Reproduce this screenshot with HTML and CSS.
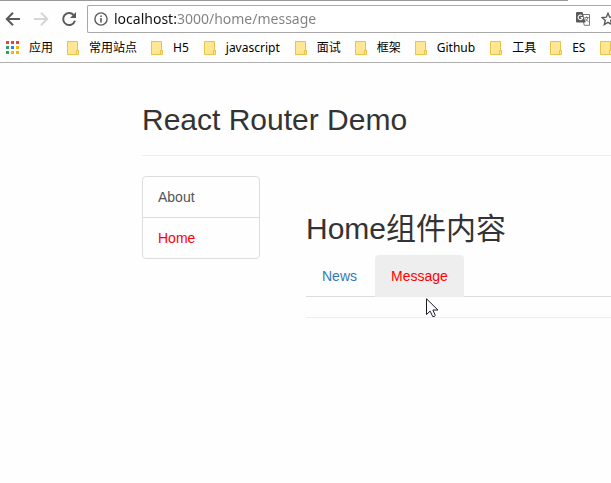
FILE: index.html
```html
<!DOCTYPE html>
<html lang="zh-CN">
<head>
<meta charset="utf-8">
<meta name="viewport" content="width=device-width, initial-scale=1">
<title>React Router Demo</title>
<link rel="stylesheet" href="styles.css">
</head>
<body>
<svg class="defs" aria-hidden="true">
  <symbol id="folder" viewBox="0 0 12 14">
    <path d="M.5.5h10v9h1v4H.5z" fill="#ffe694" stroke="#e8c34a"/>
    <path d="M9.5 9.5h2v3l-1 1h-1z" fill="#ffe694" stroke="#e8c34a"/>
  </symbol>
</svg>
<header class="browser">
  <div class="toolbar">
    <button class="nav-button" type="button" aria-label="Back">
      <svg width="16" height="16" viewBox="0 0 16 16"><path d="M15 8H2M8 1.8 1.8 8 8 14.2" fill="none" stroke="#5a5a5a" stroke-width="2"/></svg>
    </button>
    <button class="nav-button" type="button" aria-label="Forward" disabled>
      <svg width="16" height="16" viewBox="0 0 16 16"><path d="M1 8h13M8 1.8 14.2 8 8 14.2" fill="none" stroke="#d6d6d6" stroke-width="2"/></svg>
    </button>
    <button class="nav-button" type="button" aria-label="Reload">
      <svg width="16" height="16" viewBox="0 0 16 16"><path d="M12.6 4A6 6 0 1 0 13.9 9.8" fill="none" stroke="#5a5a5a" stroke-width="2"/><path d="M15 1v6H9z" fill="#5a5a5a"/></svg>
    </button>
    <div class="address">
      <svg width="14" height="14" viewBox="0 0 14 14"><circle cx="7" cy="7" r="6.1" fill="none" stroke="#5a5a5a" stroke-width="1.4"/><path d="M6.2 6h1.6v4.5H6.2zM6.2 3.4h1.6V5H6.2z" fill="#5a5a5a"/></svg>
      <input class="url" type="text" aria-label="Address" value="localhost:3000/home/message" spellcheck="false">
      <button class="address-button" type="button" aria-label="Translate">
        <svg width="14" height="14" viewBox="0 0 14 14"><path d="M6 2.5h7.5v10.8H8.2L6 2.5" fill="#fff" stroke="#777"/><path d="M0 1q0-1 1-1h5.5l3 10.5H1q-1 0-1-1z" fill="#5a5a5a"/><path d="M6 3.7A2.3 2.3 0 1 0 6.7 5.6H4.6" fill="none" stroke="#fff" stroke-width="1.1"/><path d="M8.6 5.5h4.2M10.6 4.5v1M12 5.5q-.5 2.5-3 4M9.3 6.5q1 2 3.2 3.2" fill="none" stroke="#777"/></svg>
      </button>
      <button class="address-button" type="button" aria-label="Bookmark this page">
        <svg width="14" height="14" viewBox="0 0 14 14"><path d="m7 1.3 1.7 3.9 4.2.4-3.2 2.8 1 4.2L7 10.4l-3.7 2.2 1-4.2L1.1 5.6l4.2-.4z" fill="none" stroke="#5a5a5a" stroke-width="1.4"/></svg>
      </button>
    </div>
  </div>
  <nav class="bookmarks" aria-label="Bookmarks">
    <a class="bookmark" href="#"><svg width="13" height="14" viewBox="0 0 13 14"><path d="M0 0h3v3H0zM5 0h3v3H5zM10 0h3v3h-3z" fill="#ea4335"/><path d="M0 5h3v3H0zM0 10h3v3H0z" fill="#34a060"/><path d="M5 5h3v3H5z" fill="#2a85f5"/><path d="M10 5h3v3h-3zM5 10h3v3H5zM10 10h3v3h-3z" fill="#fbb30c"/></svg>应用</a>
    <a class="bookmark" href="#"><svg width="12" height="14"><use href="#folder"/></svg>常用站点</a>
    <a class="bookmark latin" href="#"><svg width="12" height="14"><use href="#folder"/></svg>H5</a>
    <a class="bookmark latin" href="#"><svg width="12" height="14"><use href="#folder"/></svg>javascript</a>
    <a class="bookmark" href="#"><svg width="12" height="14"><use href="#folder"/></svg>面试</a>
    <a class="bookmark" href="#"><svg width="12" height="14"><use href="#folder"/></svg>框架</a>
    <a class="bookmark latin" href="#"><svg width="12" height="14"><use href="#folder"/></svg>Github</a>
    <a class="bookmark" href="#"><svg width="12" height="14"><use href="#folder"/></svg>工具</a>
    <a class="bookmark latin" href="#"><svg width="12" height="14"><use href="#folder"/></svg>ES</a>
    <a class="bookmark" href="#" aria-label="Folder"><svg width="12" height="14"><use href="#folder"/></svg></a>
  </nav>
</header>
<main class="page">
  <div class="page-header"><h2>React Router Demo</h2></div>
  <div class="row">
    <nav class="list-group" aria-label="Main">
      <a class="list-item" href="#about">About</a>
      <a class="list-item active" href="#home">Home</a>
    </nav>
    <section class="panel">
      <h2>Home组件内容</h2>
      <ul class="tabs">
        <li><a class="tab" href="#news">News</a></li>
        <li><a class="tab active" href="#message">Message<svg class="cursor" width="13" height="20" viewBox="0 0 13 20" aria-hidden="true"><path d="M.5.8v15.7l3.6-3.4 2.6 5.4q1.6.7 2.6-1L6.9 12h5z" fill="#fff" stroke="#1a1a24"/></svg></a></li>
      </ul>
      <hr>
    </section>
  </div>
</main>
</body>
</html>
```
FILE: styles.css
```css
* {
  box-sizing: border-box;
}

body {
  margin: 0;
  overflow: hidden;
  background: #fefefe;
  color: #333;
  font: 14px/20px "Liberation Sans", "Noto Sans CJK SC", sans-serif;
}

a {
  text-decoration: none;
}

button {
  border: 0;
  padding: 0;
  background: none;
}

svg {
  display: block;
  flex: none;
}

.defs {
  position: absolute;
  width: 0;
  height: 0;
}

.browser {
  border-bottom: 1px solid #b0b0b0;
  font-family: "Noto Sans", "Noto Sans CJK SC", sans-serif;
}

.browser::before {
  content: "";
  display: block;
  width: 93%;
  height: 1px;
  background: #999;
}

.toolbar {
  display: flex;
  align-items: center;
  gap: 12px;
  padding: 4px 0 0 5px;
}

.address {
  display: flex;
  flex: 1 0 auto;
  align-items: center;
  height: 28px;
  margin-left: -2px;
  padding-left: 6px;
  border: 1px solid #a8a8a8;
  border-right: 0;
  border-radius: 2px 0 0 2px;
  background: #fff;
}

.url {
  flex: 1;
  min-width: 0;
  margin-right: 12px;
  padding: 0 0 0 6px;
  border: 0;
  outline: 0;
  background: linear-gradient(to right, #111 68px, #808080 68px);
  background-clip: text;
  -webkit-background-clip: text;
  color: transparent;
  font: 14px/20px "Noto Sans", sans-serif;
}

.address-button {
  margin-right: 11px;
}

.address-button:last-child {
  margin-right: -4px;
}

.bookmarks {
  display: flex;
  align-items: center;
  gap: 14px;
  height: 29px;
  padding: 1px 0 0 6px;
}

.bookmark {
  display: flex;
  flex: none;
  align-items: center;
  gap: 10px;
  color: #000;
  font-size: 12px;
  line-height: 16px;
}

.latin {
  padding-right: 1px;
}

.page {
  padding: 40px 0 0 142px;
}

h2 {
  margin: 0 0 10px;
  font-size: 30px;
  font-weight: 400;
  line-height: 33px;
}

.page-header {
  margin-bottom: 20px;
  padding-bottom: 9px;
  border-bottom: 1px solid #eee;
}

.row {
  display: flex;
  align-items: flex-start;
  gap: 46px;
}

.list-group {
  flex: 0 0 118px;
  border: 1px solid #ddd;
  border-radius: 4px;
}

.list-item {
  display: block;
  padding: 10px 15px;
  color: #555;
}

.list-item + .list-item {
  border-top: 1px solid #ddd;
}

.panel {
  flex: 1;
  padding-top: 36px;
}

.tabs {
  display: flex;
  gap: 2px;
  margin: 0;
  padding: 0;
  border-bottom: 1px solid #ddd;
  list-style: none;
}

.tab {
  position: relative;
  display: block;
  margin-bottom: -1px;
  padding: 11px 16px;
  border-radius: 4px 4px 0 0;
  color: #337ab7;
}

.tab.active {
  background: #eee;
}

.list-item.active,
.tab.active {
  color: #f00;
}

.cursor {
  position: absolute;
  top: 43px;
  left: 51px;
}

hr {
  margin: 20px 0;
  border: 0;
  border-top: 1px solid #eee;
}
```
